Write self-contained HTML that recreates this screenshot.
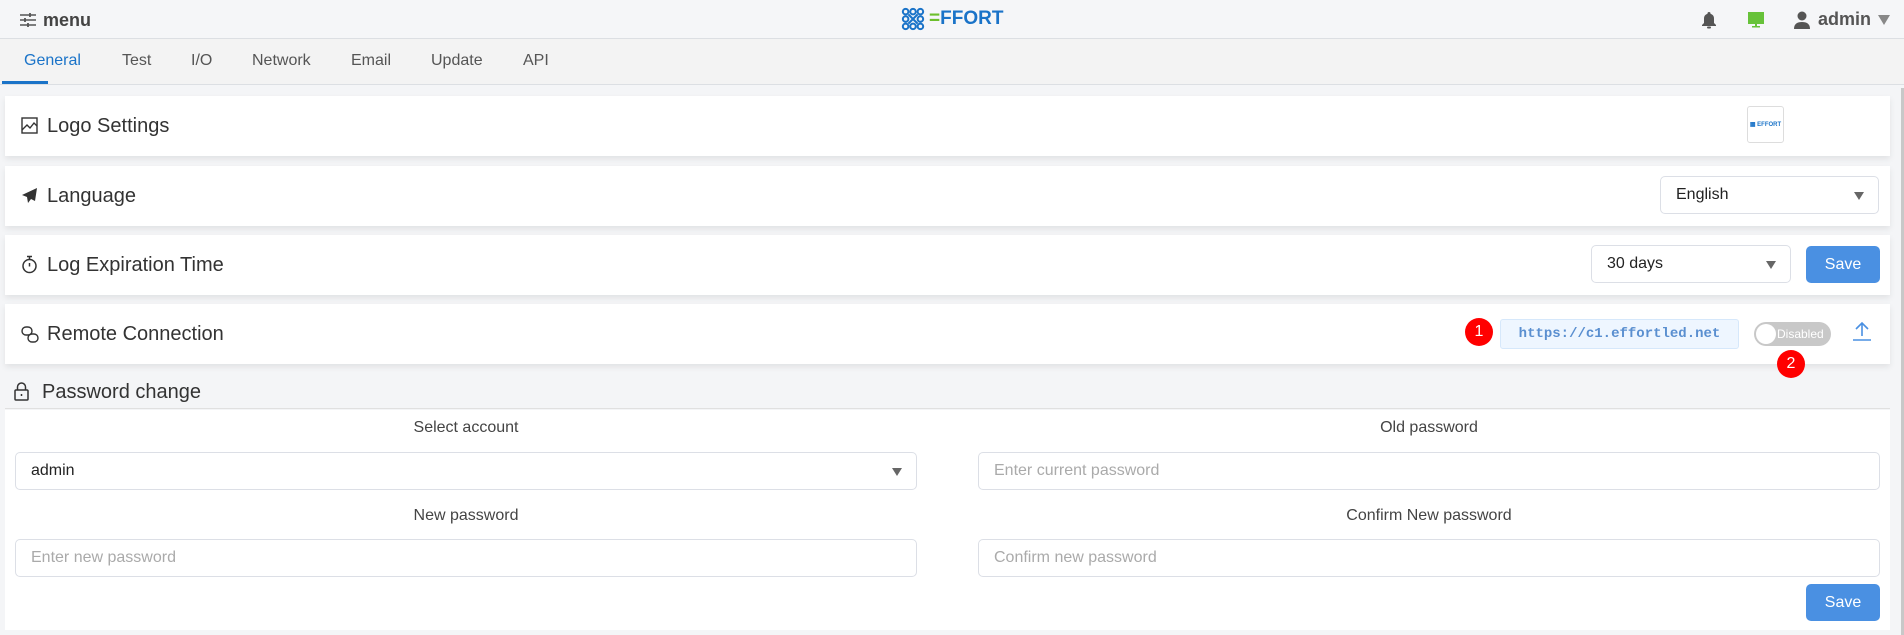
<!DOCTYPE html>
<html><head><meta charset="utf-8"><style>
*{box-sizing:border-box;margin:0;padding:0}
body{width:1904px;height:635px;overflow:hidden;background:#f4f5f7;font-family:"Liberation Sans",sans-serif;color:#333;position:relative}
.abs{position:absolute}
.hdr{left:0;top:0;width:1904px;height:39px;background:#f5f6f8;border-bottom:1px solid #dcdfe3}
.tabs{left:0;top:39px;width:1904px;height:46px;background:#f3f3f3;border-bottom:1px solid #dcdfe3}
.tab{position:absolute;top:13px;font-size:16px;color:#555}
.card{position:absolute;left:5px;width:1885px;background:#fff;box-shadow:0 3px 6px rgba(0,0,0,.08)}
.title{position:absolute;left:42px;font-size:20px;color:#333}
.ico{position:absolute;left:16px}
.sel{position:absolute;border:1px solid #dcdfe6;border-radius:5px;background:#fff;font-size:16px;color:#222;padding-left:15px;display:flex;align-items:center}
.sel:after{content:"";position:absolute;right:14px;top:50%;margin-top:-3px;border-left:5px solid transparent;border-right:5px solid transparent;border-top:8px solid #666}
.btn{position:absolute;background:#4a90e2;color:#fff;border-radius:5px;font-size:16px;display:flex;align-items:center;justify-content:center}
.inp{position:absolute;border:1px solid #dcdfe6;border-radius:5px;background:#fff;font-size:16px;color:#aaa;padding-left:15px;display:flex;align-items:center}
.lbl{position:absolute;font-size:16px;color:#444;text-align:center}
.badge{position:absolute;width:28px;height:28px;border-radius:50%;background:#f00;color:#fff;font-size:16px;display:flex;align-items:center;justify-content:center}
</style></head><body>
<div class="abs hdr">
 <svg class="abs" style="left:19px;top:12px" width="18" height="16" viewBox="0 0 18 16" fill="none" stroke="#555" stroke-width="1.6"><path d="M1 3h16M1 8h16M1 13h16"/><path d="M11 1v4M6 6v4M9 11v4" stroke-width="1.8"/></svg>
 <div class="abs" style="left:43px;top:10px;font-size:18px;font-weight:bold;color:#444">menu</div>
 <svg class="abs" style="left:901px;top:7px" width="24" height="24" viewBox="0 0 26 26" fill="none" stroke="#1a73c8" stroke-width="2.2"><circle cx="5" cy="5" r="3"/><circle cx="13" cy="5" r="3"/><circle cx="21" cy="5" r="3"/><circle cx="5" cy="13" r="3"/><circle cx="21" cy="13" r="3"/><circle cx="5" cy="21" r="3"/><circle cx="13" cy="21" r="3"/><circle cx="21" cy="21" r="3"/><path d="M8 8l10 10M18 8L8 18"/></svg>
 <div class="abs" style="left:929px;top:8px;font-size:19px;font-weight:bold;color:#1a73c8"><span style="color:#6cbf2c">=</span>FFORT</div>
 <svg class="abs" style="left:1701px;top:11px" width="16" height="18" viewBox="0 0 16 18" fill="#555"><path d="M8 1a1.5 1.5 0 0 1 1.5 1.5v.3A5 5 0 0 1 13 7.5V12l2 2v1H1v-1l2-2V7.5a5 5 0 0 1 3.5-4.7v-.3A1.5 1.5 0 0 1 8 1z"/><rect x="6" y="15.5" width="4" height="2" rx="1"/></svg>
 <svg class="abs" style="left:1748px;top:12px" width="16" height="16" viewBox="0 0 16 16" fill="#67c23a"><rect x="0" y="0" width="16" height="12"/><rect x="7" y="12" width="2" height="2"/><rect x="4" y="14" width="8" height="1.5"/></svg>
 <svg class="abs" style="left:1794px;top:11px" width="16" height="18" viewBox="0 0 16 18" fill="#555"><circle cx="8" cy="5" r="4.5"/><path d="M0 18c0-5 3-7 8-7s8 2 8 7z"/></svg>
 <div class="abs" style="left:1818px;top:9px;font-size:18px;font-weight:bold;color:#555">admin</div>
 <div class="abs" style="left:1878px;top:15px;border-left:6px solid transparent;border-right:6px solid transparent;border-top:10px solid #888"></div>
</div>
<div class="abs tabs">
 <div class="tab" style="left:24px;color:#1a73c8">General</div>
 <div class="tab" style="left:122px">Test</div>
 <div class="tab" style="left:191px">I/O</div>
 <div class="tab" style="left:252px">Network</div>
 <div class="tab" style="left:351px">Email</div>
 <div class="tab" style="left:431px">Update</div>
 <div class="tab" style="left:523px">API</div>
 <div class="abs" style="left:2px;top:42px;width:46px;height:3px;background:#1a73c8"></div>
</div>
<div class="abs" style="left:1901px;top:88px;width:3px;height:547px;background:#c8c8c8"></div>

<div class="card" style="top:96px;height:60px">
 <svg class="ico" style="top:21px" width="17" height="17" viewBox="0 0 17 17" fill="none" stroke="#333" stroke-width="1.4"><rect x="1" y="1" width="15" height="15"/><path d="M1 13l5-5 3 3 4-5 3 3"/></svg>
 <div class="title" style="top:19px">Logo Settings</div>
 <div class="abs" style="left:1742px;top:10px;width:37px;height:37px;border:1px solid #ddd;border-radius:3px;font-size:6px;font-weight:bold;color:#1a73c8;display:flex;align-items:center;justify-content:center">▦ EFFORT</div>
</div>
<div class="card" style="top:166px;height:60px">
 <svg class="ico" style="top:21px" width="17" height="17" viewBox="0 0 17 17" fill="#333"><path d="M16 1L1 8l5 2 1 6 3-4 4 2z"/></svg>
 <div class="title" style="top:19px">Language</div>
 <div class="sel" style="left:1655px;top:10px;width:219px;height:38px">English</div>
</div>
<div class="card" style="top:235px;height:60px">
 <svg class="ico" style="top:20px" width="17" height="19" viewBox="0 0 17 19" fill="none" stroke="#333" stroke-width="1.5"><circle cx="8.5" cy="11" r="6.5"/><path d="M6 1.5h5M8.5 1.5v3M8.5 8v3.5"/></svg>
 <div class="title" style="top:19px">Log Expiration Time</div>
 <div class="sel" style="left:1586px;top:10px;width:200px;height:38px">30 days</div>
 <div class="btn" style="left:1801px;top:11px;width:74px;height:37px">Save</div>
</div>
<div class="card" style="top:304px;height:60px">
 <svg class="ico" style="top:22px" width="18" height="17" viewBox="0 0 18 17" fill="none" stroke="#333" stroke-width="1.4"><rect x="1" y="1" width="10" height="8" rx="4"/><rect x="7" y="8" width="10" height="8" rx="4"/></svg>
 <div class="title" style="top:19px">Remote Connection</div>
 <div class="badge" style="left:1460px;top:14px">1</div>
 <div class="abs" style="left:1495px;top:15px;width:239px;height:30px;background:#eef6ff;border:1px solid #d6e8fb;border-radius:3px;font-family:'Liberation Mono',monospace;font-size:14px;font-weight:bold;color:#5a8fd0;display:flex;align-items:center;justify-content:center">https://c1.effortled.net</div>
 <div class="abs" style="left:1749px;top:18px;width:77px;height:24px;border-radius:12px;background:#c8c8c8"><div class="abs" style="left:2px;top:2px;width:20px;height:20px;border-radius:50%;background:#fff"></div><div class="abs" style="left:23px;top:5px;font-size:12px;color:#fff">Disabled</div></div>
 <svg class="abs" style="left:1848px;top:17px" width="18" height="20" viewBox="0 0 18 20" fill="none" stroke="#4a90e2" stroke-width="1.6"><path d="M9 15V2M3 8l6-6 6 6M0 19h18"/></svg>
</div>
<div class="badge abs" style="left:1777px;top:350px">2</div>
<div class="abs" style="left:5px;top:374px;width:1885px;height:35px;border-bottom:1px solid #e0e0e0">
 <svg class="abs" style="left:9px;top:8px" width="15" height="19" viewBox="0 0 15 19" fill="none" stroke="#333" stroke-width="1.5"><rect x="1" y="8" width="13" height="10" rx="1"/><path d="M3.5 8V5a4 4 0 0 1 8 0v3M7.5 12v2"/></svg>
 <div class="abs" style="left:37px;top:7px;font-size:20px;color:#333">Password change</div>
</div>
<div class="abs" style="left:5px;top:410px;width:1885px;height:220px;background:#fff">
 <div class="lbl" style="left:10px;top:9px;width:902px">Select account</div>
 <div class="sel" style="left:10px;top:42px;width:902px;height:38px">admin</div>
 <div class="lbl" style="left:973px;top:9px;width:902px">Old password</div>
 <div class="inp" style="left:973px;top:42px;width:902px;height:38px">Enter current password</div>
 <div class="lbl" style="left:10px;top:97px;width:902px">New password</div>
 <div class="inp" style="left:10px;top:129px;width:902px;height:38px">Enter new password</div>
 <div class="lbl" style="left:973px;top:97px;width:902px">Confirm New password</div>
 <div class="inp" style="left:973px;top:129px;width:902px;height:38px">Confirm new password</div>
 <div class="btn" style="left:1801px;top:174px;width:74px;height:37px">Save</div>
</div>
</body></html>
